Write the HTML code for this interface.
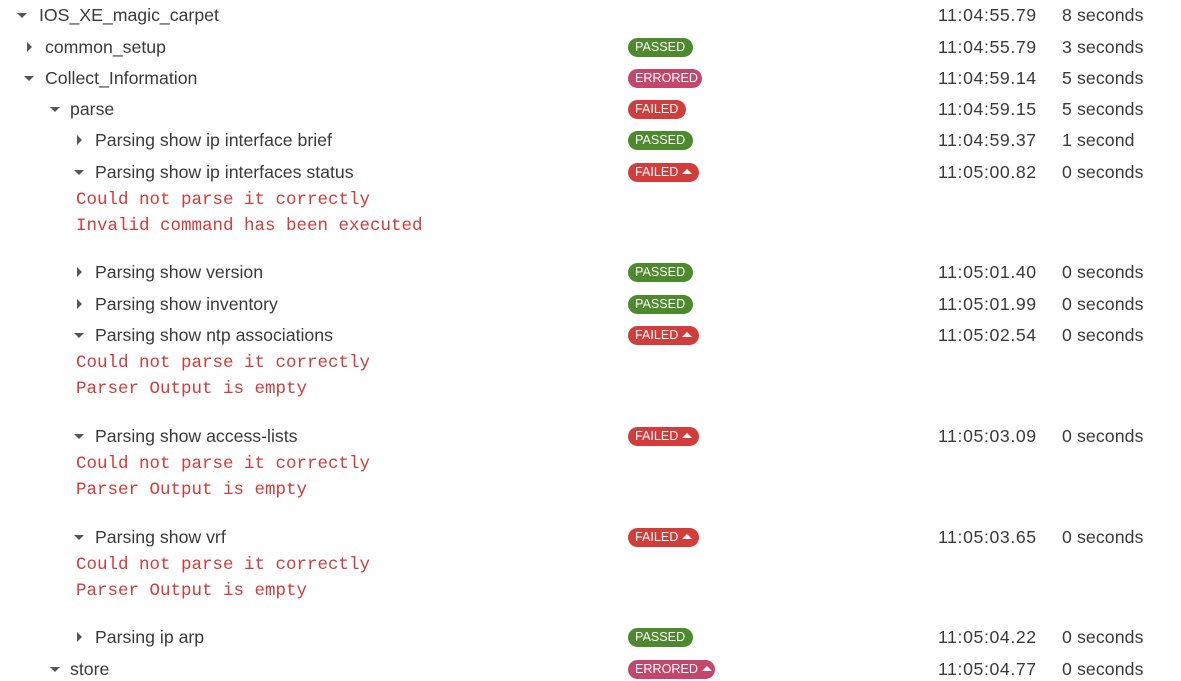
<!DOCTYPE html>
<html><head><style>
body{margin:0;width:1181px;height:681px;background:#fff;overflow:hidden;font-family:"Liberation Sans",sans-serif;color:#3a3a3a;position:relative}
.r{position:absolute;height:20px;line-height:20px;font-size:17.7px;white-space:nowrap;margin-top:0px}
.c{position:absolute;width:0;height:0;border-style:solid}
.down{border-width:5px 5px 0 5px;border-color:#555 transparent transparent transparent}
.right{border-width:5px 0 5px 5px;border-color:transparent transparent transparent #555}
.b{position:absolute;left:628px;height:19px;line-height:19px;border-radius:10px;color:#fff;font-size:12.6px;padding:0 7px;box-sizing:border-box;white-space:nowrap;text-align:left}
.p{background:#4d8a2e;width:65px}
.e{background:#c4466a}
.f{background:#d23c3a}
.t{position:absolute;left:938px;font-size:17.7px;line-height:20px;letter-spacing:0.6px}
.d{position:absolute;left:1062px;font-size:17.7px;line-height:20px;letter-spacing:0.1px}
.m{position:absolute;left:76px;font-family:"Liberation Mono",monospace;font-size:17.5px;color:#d23c3a;line-height:20px;margin-top:1px}
.tri{display:inline-block;width:0;height:0;border-style:solid;border-width:0 5px 5px 5px;border-color:transparent transparent #fff transparent;vertical-align:2px;margin-left:4px}
</style></head><body>
<div class="c down" style="left:17px;top:13px"></div><div class="r" style="left:39px;top:5px">IOS_XE_magic_carpet</div>
<div class="t" style="top:5px">11:04:55.79</div><div class="d" style="top:5px">8 seconds</div>

<div class="c right" style="left:27px;top:42px"></div><div class="r" style="left:45px;top:37px">common_setup</div>
<div class="b p" style="top:38px">PASSED</div><div class="t" style="top:37px">11:04:55.79</div><div class="d" style="top:37px">3 seconds</div>

<div class="c down" style="left:24px;top:76px"></div><div class="r" style="left:45px;top:68px">Collect_Information</div>
<div class="b e" style="top:69px;width:74px">ERRORED</div><div class="t" style="top:68px">11:04:59.14</div><div class="d" style="top:68px">5 seconds</div>

<div class="c down" style="left:50px;top:107px"></div><div class="r" style="left:70px;top:99px">parse</div>
<div class="b f" style="top:100px;width:58px">FAILED</div><div class="t" style="top:99px">11:04:59.15</div><div class="d" style="top:99px">5 seconds</div>

<div class="c right" style="left:77px;top:135px"></div><div class="r" style="left:95px;top:130px">Parsing show ip interface brief</div>
<div class="b p" style="top:131px">PASSED</div><div class="t" style="top:130px">11:04:59.37</div><div class="d" style="top:130px">1 second</div>

<div class="c down" style="left:74px;top:170px"></div><div class="r" style="left:95px;top:162px">Parsing show ip interfaces status</div>
<div class="b f" style="top:163px;width:71px">FAILED<span class="tri"></span></div><div class="t" style="top:162px">11:05:00.82</div><div class="d" style="top:162px">0 seconds</div>
<div class="m" style="top:189px">Could not parse it correctly</div>
<div class="m" style="top:215px">Invalid command has been executed</div>

<div class="c right" style="left:77px;top:267px"></div><div class="r" style="left:95px;top:262px">Parsing show version</div>
<div class="b p" style="top:263px">PASSED</div><div class="t" style="top:262px">11:05:01.40</div><div class="d" style="top:262px">0 seconds</div>

<div class="c right" style="left:77px;top:299px"></div><div class="r" style="left:95px;top:294px">Parsing show inventory</div>
<div class="b p" style="top:295px">PASSED</div><div class="t" style="top:294px">11:05:01.99</div><div class="d" style="top:294px">0 seconds</div>

<div class="c down" style="left:74px;top:333px"></div><div class="r" style="left:95px;top:325px">Parsing show ntp associations</div>
<div class="b f" style="top:326px;width:71px">FAILED<span class="tri"></span></div><div class="t" style="top:325px">11:05:02.54</div><div class="d" style="top:325px">0 seconds</div>
<div class="m" style="top:352px">Could not parse it correctly</div>
<div class="m" style="top:378px">Parser Output is empty</div>

<div class="c down" style="left:74px;top:434px"></div><div class="r" style="left:95px;top:426px">Parsing show access-lists</div>
<div class="b f" style="top:427px;width:71px">FAILED<span class="tri"></span></div><div class="t" style="top:426px">11:05:03.09</div><div class="d" style="top:426px">0 seconds</div>
<div class="m" style="top:453px">Could not parse it correctly</div>
<div class="m" style="top:479px">Parser Output is empty</div>

<div class="c down" style="left:74px;top:535px"></div><div class="r" style="left:95px;top:527px">Parsing show vrf</div>
<div class="b f" style="top:528px;width:71px">FAILED<span class="tri"></span></div><div class="t" style="top:527px">11:05:03.65</div><div class="d" style="top:527px">0 seconds</div>
<div class="m" style="top:554px">Could not parse it correctly</div>
<div class="m" style="top:580px">Parser Output is empty</div>

<div class="c right" style="left:77px;top:632px"></div><div class="r" style="left:95px;top:627px">Parsing ip arp</div>
<div class="b p" style="top:628px">PASSED</div><div class="t" style="top:627px">11:05:04.22</div><div class="d" style="top:627px">0 seconds</div>

<div class="c down" style="left:50px;top:667px"></div><div class="r" style="left:70px;top:659px">store</div>
<div class="b e" style="top:660px;width:87px">ERRORED<span class="tri"></span></div><div class="t" style="top:659px">11:05:04.77</div><div class="d" style="top:659px">0 seconds</div>
</body></html>
